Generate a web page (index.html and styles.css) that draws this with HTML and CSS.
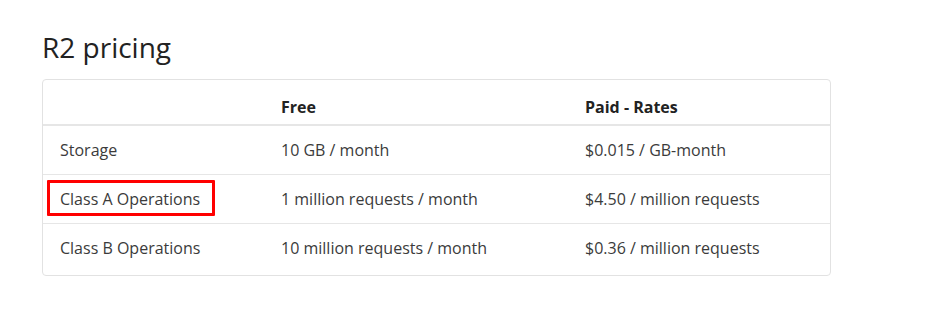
FILE: index.html
```html
<!DOCTYPE html>
<html>
<head>
<meta charset="utf-8">
<link rel="stylesheet" href="styles.css">
</head>
<body>
<main class="page">
  <h2 class="title">R2 pricing</h2>
  <div class="card">
    <table class="pricing">
      <colgroup>
        <col class="c1">
        <col class="c2">
        <col class="c3">
      </colgroup>
      <thead>
        <tr>
          <th></th>
          <th>Free</th>
          <th>Paid - Rates</th>
        </tr>
      </thead>
      <tbody>
        <tr>
          <td>Storage</td>
          <td>10 GB / month</td>
          <td>$0.015 / GB-month</td>
        </tr>
        <tr>
          <td><span class="highlight">Class A Operations</span></td>
          <td>1 million requests / month</td>
          <td>$4.50 / million requests</td>
        </tr>
        <tr>
          <td>Class B Operations</td>
          <td>10 million requests / month</td>
          <td>$0.36 / million requests</td>
        </tr>
      </tbody>
    </table>
  </div>
</main>
</body>
</html>
```
FILE: styles.css
```css
html, body {
  margin: 0;
  padding: 0;
  background: #ffffff;
}
body {
  font-family: "Open Sans", "Noto Sans", sans-serif;
  color: #3b3b3b;
}
.page {
  padding: 29px 0 0 42px;
  width: 789px;
}
.title {
  margin: 0 0 14px 0;
  font-size: 28px;
  font-weight: 500;
  color: #222222;
  line-height: 36px;
}
.card {
  border: 1px solid #e2e2e2;
  border-radius: 4px;
  overflow: hidden;
}
.pricing {
  width: 100%;
  table-layout: fixed;
  border-collapse: separate;
  border-spacing: 0;
  font-size: 16px;
  line-height: 22px;
}
.c1 { width: 221px; }
.c2 { width: 304px; }
.pricing th,
.pricing td {
  text-align: left;
  padding: 13px 0 13px 17px;
  white-space: nowrap;
}
.pricing th {
  font-weight: 700;
  color: #222222;
  padding: 16px 0 6px 17px;
  border-bottom: 2px solid #e6e6e6;
}
.pricing tbody td {
  border-bottom: 1px solid #e6e6e6;
}
.pricing tbody tr:last-child td {
  border-bottom: none;
  padding-bottom: 16px;
}
.highlight {
  display: inline-block;
  margin: -11px 0 -8px -13px;
  padding: 5px 12px 3px 10px;
  border: 3px solid #ff0000;
  border-radius: 1px;
}
```
